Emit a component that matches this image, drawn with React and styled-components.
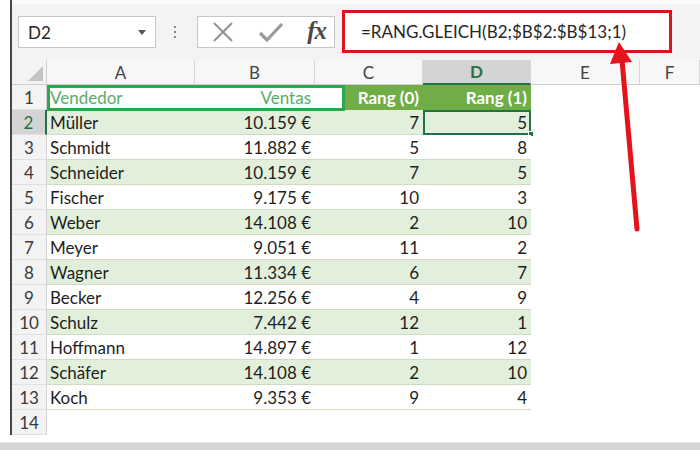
import React from "react";
import styled, { createGlobalStyle } from "styled-components";

const GlobalStyle = createGlobalStyle`
  html, body { margin: 0; padding: 0; background: #ffffff; }
  body { font-family: Lato, "Open Sans", sans-serif; }
  * { box-sizing: border-box; }
`;

const Frame = styled.div`
  position: relative;
  width: 700px;
  height: 450px;
  overflow: hidden;
  background: #ffffff;
  display: flex;
  flex-direction: column;
`;

const Window = styled.div`
  margin-left: 10px;
  border-left: 2px solid #3f4a42;
  height: 435px;
  display: flex;
  flex-direction: column;
`;

const BottomGap = styled.div`
  height: 8px;
  border-bottom: 1px solid #e6e6e6;
`;

const BottomStrip = styled.div`
  flex: 1;
  background: #d6d6d6;
`;

const Toolbar = styled.div`
  height: 60px;
  flex: none;
  background: linear-gradient(#fbfbfb 0 4px, #f3f3f3 4px);
  padding-top: 4px;
  display: flex;
  align-items: center;
`;

const NameBox = styled.div`
  margin-left: 6px;
  width: 138px;
  height: 32px;
  background: #ffffff;
  border: 1px solid #c6c6c6;
  display: flex;
  align-items: center;
  justify-content: space-between;
  padding: 0 9px 0 9px;
  font-size: 17px;
  color: #262626;
`;

const Caret = styled.span`
  width: 0;
  height: 0;
  border-left: 4px solid transparent;
  border-right: 4px solid transparent;
  border-top: 5px solid #555555;
`;

const Dots = styled.div`
  width: 41px;
  display: flex;
  flex-direction: column;
  align-items: center;
  gap: 3px;
  padding-right: 3px;
  span {
    width: 2px;
    height: 2px;
    background: #8a8a8a;
  }
`;

const ButtonGroup = styled.div`
  width: 138px;
  height: 32px;
  background: #ffffff;
  border: 1px solid #c6c6c6;
  display: flex;
  align-items: center;
  justify-content: space-between;
  padding: 0 8px 0 14px;
`;

const Fx = styled.span`
  font-family: "Liberation Serif", "DejaVu Serif", serif;
  font-style: italic;
  font-weight: bold;
  font-size: 25px;
  color: #4a4a4a;
  letter-spacing: -1px;
  margin-top: -3px;
`;

const FormulaBox = styled.div`
  margin-left: 7px;
  width: 330px;
  height: 43px;
  margin-top: -1px;
  background: #ffffff;
  border: 3px solid #d8141c;
  display: flex;
  align-items: center;
  padding-left: 16px;
  font-size: 17px;
  color: #262626;
`;

const Sheet = styled.div`
  position: relative;
  display: grid;
  grid-template-columns: 35px 148px 120px 108px 108px 109px 1fr;
  grid-auto-rows: 25px;
  font-size: 17px;
  color: #222222;
`;

const Corner = styled.div`
  background: #f3f3f3;
  border-right: 1px solid #cfcfcf;
  border-bottom: 1px solid #cfcfcf;
  position: relative;
  &::after {
    content: "";
    position: absolute;
    right: 3px;
    bottom: 3px;
    width: 0;
    height: 0;
    border-left: 15px solid transparent;
    border-bottom: 15px solid #c4c4c4;
  }
`;

const ColHead = styled.div`
  background: ${(p) => (p.$active ? "#d4d4d4" : "#f7f7f7")};
  color: ${(p) => (p.$active ? "#217346" : "#444444")};
  font-weight: ${(p) => (p.$active ? 700 : 400)};
  border-right: 1px solid #d6d6d6;
  border-bottom: ${(p) => (p.$active ? "2px solid #217346" : "1px solid #cfcfcf")};
  display: flex;
  align-items: center;
  justify-content: center;
  font-size: 17px;
`;

const RowHead = styled.div`
  background: ${(p) => (p.$active ? "#d4d4d4" : "#f3f3f3")};
  color: ${(p) => (p.$active ? "#217346" : "#3a3a3a")};
  border-right: ${(p) => (p.$active ? "2px solid #217346" : "1px solid #cfcfcf")};
  border-bottom: 1px solid #e1e1e1;
  display: flex;
  align-items: center;
  justify-content: center;
  font-size: 17px;
`;

const Cell = styled.div`
  position: relative;
  background: ${(p) => p.$fill || "transparent"};
  color: ${(p) => p.$color || "#1e1e1e"};
  font-weight: ${(p) => (p.$bold ? 700 : 400)};
  border-bottom: ${(p) => (p.$line ? "1px solid #cddcc2" : "none")};
  display: flex;
  align-items: center;
  justify-content: ${(p) => (p.$right ? "flex-end" : "flex-start")};
  padding: 0 4px 0 3px;
  white-space: nowrap;
  z-index: 1;
  ${(p) =>
    p.$selected &&
    `
    outline: 2px solid #217346;
    outline-offset: -2px;
  `}
`;

const Handle = styled.span`
  position: absolute;
  right: -3px;
  bottom: -3px;
  width: 6px;
  height: 6px;
  background: #217346;
  border: 1px solid #ffffff;
`;

const HeaderHighlight = styled.div`
  position: absolute;
  left: 35px;
  top: 25px;
  width: 298px;
  height: 26px;
  border: 3px solid #2ea64c;
  background: #ffffff;
  z-index: 2;
  pointer-events: none;
`;

const HeaderLabel = styled(Cell)`
  z-index: 3;
  color: #5aac68;
  background: transparent;
`;

const ArrowLayer = styled.svg`
  position: absolute;
  left: 0;
  top: 0;
  width: 700px;
  height: 450px;
  pointer-events: none;
`;

const data = [
  ["Müller", "10.159 €", 7, 5],
  ["Schmidt", "11.882 €", 5, 8],
  ["Schneider", "10.159 €", 7, 5],
  ["Fischer", "9.175 €", 10, 3],
  ["Weber", "14.108 €", 2, 10],
  ["Meyer", "9.051 €", 11, 2],
  ["Wagner", "11.334 €", 6, 7],
  ["Becker", "12.256 €", 4, 9],
  ["Schulz", "7.442 €", 12, 1],
  ["Hoffmann", "14.897 €", 1, 12],
  ["Schäfer", "14.108 €", 2, 10],
  ["Koch", "9.353 €", 9, 4],
];

const cols = ["A", "B", "C", "D", "E", "F"];

export default function App() {
  return (
    <>
      <GlobalStyle />
      <Frame>
        <Window>
          <Toolbar>
            <NameBox>
              <span>D2</span>
              <Caret />
            </NameBox>
            <Dots>
              <span />
              <span />
              <span />
            </Dots>
            <ButtonGroup>
              <svg width="22" height="22" viewBox="0 0 22 22">
                <path d="M2 2 L20 20 M20 2 L2 20" stroke="#8e8e8e" strokeWidth="1.8" fill="none" />
              </svg>
              <svg width="26" height="22" viewBox="0 0 26 22">
                <path d="M2 12 L9 19 L24 3" stroke="#9a9a9a" strokeWidth="3.2" fill="none" />
              </svg>
              <Fx>fx</Fx>
            </ButtonGroup>
            <FormulaBox>=RANG.GLEICH(B2;$B$2:$B$13;1)</FormulaBox>
          </Toolbar>
          <Sheet>
            <Corner />
            {cols.map((c) => (
              <ColHead key={c} $active={c === "D"}>
                {c}
              </ColHead>
            ))}

            <RowHead>1</RowHead>
            <HeaderHighlight />
            <HeaderLabel>Vendedor</HeaderLabel>
            <HeaderLabel $right>Ventas</HeaderLabel>
            <Cell $fill="#70ad47" $color="#ffffff" $bold $right>
              Rang (0)
            </Cell>
            <Cell $fill="#70ad47" $color="#ffffff" $bold $right>
              Rang (1)
            </Cell>
            <Cell />
            <Cell />

            {data.map((r, i) => {
              const fill = i % 2 === 0 ? "#e2efda" : "#ffffff";
              return (
                <React.Fragment key={r[0]}>
                  <RowHead $active={i === 0}>{i + 2}</RowHead>
                  <Cell $fill={fill} $line>
                    {r[0]}
                  </Cell>
                  <Cell $fill={fill} $line $right>
                    {r[1]}
                  </Cell>
                  <Cell $fill={fill} $line $right>
                    {r[2]}
                  </Cell>
                  <Cell $fill={fill} $line $right $selected={i === 0}>
                    {r[3]}
                    {i === 0 && <Handle />}
                  </Cell>
                  <Cell />
                  <Cell />
                </React.Fragment>
              );
            })}

            <RowHead>14</RowHead>
            <Cell />
            <Cell />
            <Cell />
            <Cell />
            <Cell />
            <Cell />
          </Sheet>
        </Window>
        <BottomGap />
        <BottomStrip />
        <ArrowLayer viewBox="0 0 700 450">
          <line x1="637" y1="229" x2="622" y2="60" stroke="#e3141b" strokeWidth="5" strokeLinecap="round" />
          <polygon points="619,42 610,64 632,62" fill="#e3141b" />
        </ArrowLayer>
      </Frame>
    </>
  );
}
